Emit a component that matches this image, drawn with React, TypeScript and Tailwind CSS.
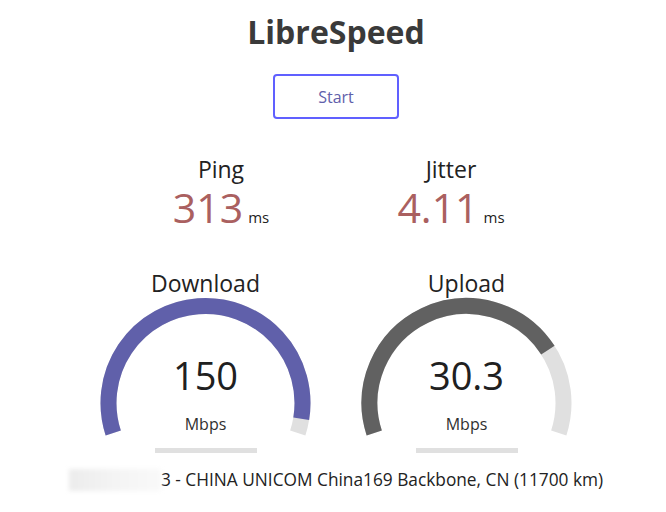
import React from "react";

const font = { fontFamily: '"Open Sans", "Noto Sans", sans-serif' };

const START = -Math.PI * 1.1;
const SWEEP = Math.PI * 1.2;

function arcPath(cx: number, cy: number, r: number, a0: number, a1: number) {
  const x0 = cx + r * Math.cos(a0);
  const y0 = cy + r * Math.sin(a0);
  const x1 = cx + r * Math.cos(a1);
  const y1 = cy + r * Math.sin(a1);
  const large = a1 - a0 > Math.PI ? 1 : 0;
  return `M ${x0} ${y0} A ${r} ${r} 0 ${large} 1 ${x1} ${y1}`;
}

function mbpsToAmount(s: number) {
  return 1 - 1 / Math.pow(1.3, Math.sqrt(s));
}

function Gauge({ label, value, amount, color }: { label: string; value: string; amount: number; color: string }) {
  const cx = 130.5;
  const cy = 109;
  const r = 97;
  return (
    <div className="w-[261px] flex flex-col items-center">
      <div className="pt-[6px] text-[23px] leading-[22px] text-[#222]">{label}</div>
      <svg width={261} height={150} className="block">
        <path d={arcPath(cx, cy, r, START, START + SWEEP)} stroke="#e0e0e0" strokeWidth={16} fill="none" />
        <path d={arcPath(cx, cy, r, START, START + SWEEP * amount)} stroke={color} strokeWidth={16} fill="none" />
        <text x={cx} y={96} textAnchor="middle" fontSize={38} fill="#202020" style={font}>
          {value}
        </text>
        <text x={cx} y={136} textAnchor="middle" fontSize={16} fill="#303030" style={font}>
          Mbps
        </text>
      </svg>
      <div className="mt-[4px] w-[102px] h-[5px] bg-[#e0e0e0]" />
    </div>
  );
}

function Stat({ label, value }: { label: string; value: string }) {
  return (
    <div className="w-[230px] flex flex-col items-center">
      <div className="text-[23px] leading-[28px] text-[#222]">{label}</div>
      <div className="flex items-baseline h-[48px] leading-[48px]">
        <span className="text-[41px] leading-[48px] text-[#aa6060]">{value}</span>
        <span className="ml-[5px] text-[15px] leading-[20px] text-[#222]">ms</span>
      </div>
    </div>
  );
}

export default function App() {
  return (
    <div className="min-h-[512px] bg-white pl-[6px] flex flex-col items-center" style={font}>
      <h1 className="mt-[11px] text-[32px] leading-[42px] font-bold text-[#3a3a3a]">LibreSpeed</h1>
      <button className="mt-[21px] w-[126px] h-[45px] border-2 border-[#6060ff] rounded-[4px] text-[16px] text-[#6060aa] bg-white">
        Start
      </button>
      <div className="mt-[36px] flex">
        <Stat label="Ping" value="313" />
        <Stat label="Jitter" value="4.11" />
      </div>
      <div className="mt-[35px] flex">
        <Gauge label="Download" value="150" amount={mbpsToAmount(150)} color="#6060aa" />
        <Gauge label="Upload" value="30.3" amount={mbpsToAmount(30.3)} color="#616161" />
      </div>
      <div className="mt-[15px] flex items-center">
        <div className="w-[92px] h-[22px] bg-gradient-to-r from-[#ececec] via-[#f4f4f4] to-[#f9f9f9] blur-[2px]" />
        <span className="text-[17.3px] leading-[24px] text-[#222]">3 - CHINA UNICOM China169 Backbone, CN (11700 km)</span>
      </div>
    </div>
  );
}
